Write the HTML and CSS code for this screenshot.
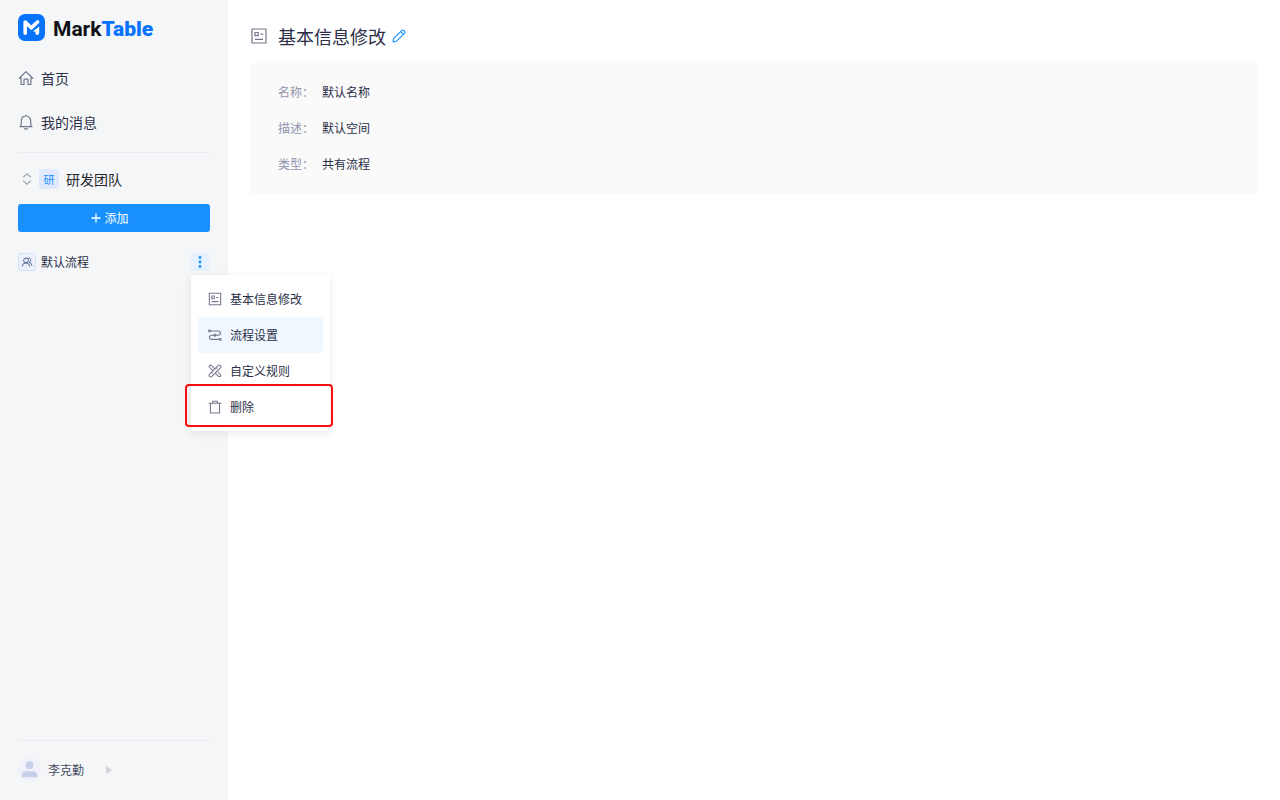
FILE: index.html
```html
<!DOCTYPE html>
<html lang="zh-CN">
<head>
    <meta charset="UTF-8">
    <meta name="viewport" content="width=device-width, initial-scale=1.0">
    <title>MarkTable</title>
    <link rel="stylesheet" href="styles.css">
</head>
<body>
    <aside class="sidebar">
        <a class="logo" href="#">
            <svg width="27" height="27" viewBox="0 0 27 27">
                <rect width="27" height="27" rx="7" fill="#0773fc"/>
                <path d="M7.2 19.3V8L13.2 13.8L19.6 8" fill="none" stroke="#fff" stroke-width="3.6" stroke-linecap="round" stroke-linejoin="round"/>
                <path d="M21.2 12.4V18.6Q21.2 21 19.2 21Q17.4 21 17.4 19V17.6H14.8Z" fill="#fff"/>
            </svg>
            <span class="logo-text">Mark<b>Table</b></span>
        </a>

        <nav class="nav">
            <a href="#">
                <svg class="icon" width="16" height="16" viewBox="0 0 16 16">
                    <path d="M1.2 8.2L8 1.6L14.8 8.2H12.9V14.5H10V9.8Q10 9.2 9.4 9.2H6.6Q6 9.2 6 9.8V14.5H3.1V8.2Z"/>
                </svg>
                首页
            </a>
            <a href="#">
                <svg class="icon" width="16" height="16" viewBox="0 0 16 16">
                    <path d="M8 .8V2M1.6 12.6H14.4M2.8 12.4Q3.3 11 3.3 7.2C3.3 4 5.2 2 8 2S12.7 4 12.7 7.2Q12.7 11 13.2 12.4M6 14.8H10"/>
                </svg>
                我的消息
            </a>
        </nav>

        <div class="team">
            <svg class="switch" width="10" height="12" viewBox="0 0 10 12">
                <path d="M1.2 4.2L5 .8L8.8 4.2M1.2 7.8L5 11.2L8.8 7.8"/>
            </svg>
            <span class="team-badge">研</span>
            <span>研发团队</span>
        </div>

        <button class="add" type="button">
            <svg width="10" height="10" viewBox="0 0 10 10">
                <path d="M5 .5V9.5M.5 5H9.5"/>
            </svg>
            添加
        </button>

        <div class="flow">
            <span class="flow-icon">
                <svg width="12" height="12" viewBox="0 0 12 12">
                    <circle cx="5" cy="4.4" r="2.4"/>
                    <path d="M1.2 10.4Q1.4 6.8 5 6.8T8.7 10.4M7.2 2.1C9.9 1.6 10.6 5.3 8.3 6.2Q10.6 6.8 10.9 9.6"/>
                </svg>
            </span>
            <span>默认流程</span>
            <div class="more">
                <button class="more-button" type="button" aria-label="更多">
                    <svg width="4" height="14" viewBox="0 0 4 14">
                        <circle cx="2" cy="2.5" r="1.4"/>
                        <circle cx="2" cy="7" r="1.4"/>
                        <circle cx="2" cy="11.5" r="1.4"/>
                    </svg>
                </button>
                <div class="menu">
                    <button type="button">
                        <svg class="icon" width="14" height="14" viewBox="0 0 16 16">
                            <path d="M1.5 1.5H14.5V14.5H1.5ZM4.3 4.6H7.3V7.6H4.3ZM9.3 6.2H12M4.2 11H11.8"/>
                        </svg>
                        基本信息修改
                    </button>
                    <button class="active" type="button">
                        <svg class="icon" width="14" height="14" viewBox="0 0 16 16">
                            <path d="M2 3.5H11.5C15.3 3.5 15.3 8.2 11.5 8.2H4.5C.7 8.2 .7 13 4.5 13H13"/>
                            <circle cx="1.8" cy="3.5" r="1.1"/>
                            <circle cx="8" cy="8.2" r="1.1"/>
                            <circle cx="14" cy="13" r="1.1"/>
                        </svg>
                        流程设置
                    </button>
                    <button type="button">
                        <svg class="icon" width="14" height="14" viewBox="0 0 16 16">
                            <path d="M5.8 8L1.8 4Q.8 2.8 1.8 1.8T4 1.8L8 5.8M10.2 8L14.2 12V14.2H12L8 10.2M1.5 11.8L11.8 1.5Q13 .8 14.2 1.8T14.5 4.2L4.2 14.5Q2.8 15.2 1.8 14.2T1.5 11.8ZM4 9.3L5.3 10.6M9.3 4L10.6 5.3"/>
                        </svg>
                        自定义规则
                    </button>
                    <button class="marked" type="button">
                        <svg class="icon" width="14" height="14" viewBox="0 0 16 16">
                            <path d="M.8 3.6H15.2M5.2 3.4V1.4H10.8V3.4M2.8 3.6V14.8H13.2V3.6"/>
                        </svg>
                        删除
                    </button>
                </div>
            </div>
        </div>

        <div class="user">
            <svg width="23" height="23" viewBox="0 0 23 23">
                <circle cx="11.5" cy="11.5" r="11.5" fill="#f0f1fb"/>
                <circle cx="11.5" cy="7.2" r="3.9" fill="#c7d0e8"/>
                <path d="M3.8 19.2V17.5Q3.8 13.2 8 13.2H15Q19.2 13.2 19.2 17.5V19.2Z" fill="#c7d0e8"/>
            </svg>
            <span>李克勤</span>
            <svg class="arrow" width="6" height="10" viewBox="0 0 6 10">
                <path d="M0 .5L6 5L0 9.5Z" fill="#d3d5d8"/>
            </svg>
        </div>
    </aside>

    <main class="content">
        <header class="title">
            <svg class="icon" width="18" height="18" viewBox="0 0 18 18">
                <path d="M2 2H16V16H2ZM5 5.5H8.2V8.7H5ZM10.6 7.2H13.2M5 12.4H13"/>
            </svg>
            <h1>基本信息修改</h1>
            <button class="edit" type="button" aria-label="编辑">
                <svg width="14" height="14" viewBox="0 0 14 14">
                    <path d="M1 13L1.8 9.4L9.9 1.3Q10.7 .6 11.5 1.3L12.7 2.5Q13.4 3.3 12.7 4.1L4.6 12.2ZM8.6 2.6L11.4 5.4"/>
                </svg>
            </button>
        </header>
        <dl class="info">
            <div><dt>名称：</dt><dd>默认名称</dd></div>
            <div><dt>描述：</dt><dd>默认空间</dd></div>
            <div><dt>类型：</dt><dd>共有流程</dd></div>
        </dl>
    </main>
</body>
</html>
```
FILE: styles.css
```css
* {
    box-sizing: border-box;
}
body {
    display: flex;
    min-height: 100vh;
    margin: 0;
    background: #fff;
    color: #2b2f48;
    font-family: "Noto Sans CJK SC", sans-serif;
    font-size: 12px;
    line-height: 20px;
}
a {
    color: inherit;
    text-decoration: none;
}
button {
    padding: 0;
    border: none;
    background: none;
    color: inherit;
    font: inherit;
    cursor: pointer;
}
svg {
    flex: none;
    display: block;
}
.icon {
    fill: none;
    stroke: #74768c;
    stroke-width: 1.2;
    stroke-linejoin: round;
}

/* sidebar */
.sidebar {
    display: flex;
    flex-direction: column;
    flex: none;
    width: 228px;
    padding: 14px 18px 19px;
    background: #f4f6f8;
}
.logo {
    display: flex;
    align-items: center;
    gap: 8px;
    height: 27px;
}
.logo-text {
    padding-top: 2px;
    color: #101114;
    font-family: Roboto, sans-serif;
    font-size: 21px;
    font-weight: 700;
}
.logo-text b {
    color: #0773fc;
}
.nav {
    margin-top: 15px;
    padding-bottom: 8px;
    border-bottom: 1px solid #eaecef;
}
.nav a {
    display: flex;
    align-items: center;
    gap: 7px;
    height: 44px;
    font-size: 14px;
}
.team {
    display: flex;
    align-items: center;
    gap: 7px;
    height: 51px;
    padding-left: 4px;
    color: #25262b;
    font-size: 14px;
}
.switch {
    fill: none;
    stroke: #a3a6ab;
    stroke-width: 1.2;
}
.team-badge {
    width: 20px;
    border-radius: 3px;
    background: #e1e9fc;
    color: #1890ff;
    font-size: 11px;
    text-align: center;
}
.add {
    display: flex;
    align-items: center;
    justify-content: center;
    gap: 3px;
    height: 28px;
    padding-right: 8px;
    border-radius: 3px;
    background: #1890ff;
    color: #fff;
}
.add svg {
    stroke: #fff;
    stroke-width: 1.3;
}
.flow {
    display: flex;
    align-items: center;
    gap: 5px;
    height: 36px;
    margin-top: 12px;
    padding-right: 1px;
}
.flow-icon {
    display: flex;
    align-items: center;
    justify-content: center;
    width: 18px;
    height: 18px;
    border: 1px solid #cfe5fc;
    border-radius: 3px;
    background: #eef1fc;
}
.flow-icon svg {
    fill: none;
    stroke: #47658f;
    stroke-width: 1;
}
.more {
    position: relative;
    margin-left: auto;
}
.more-button {
    display: flex;
    align-items: center;
    justify-content: center;
    width: 18px;
    height: 18px;
    border-radius: 3px;
    background: #e5f2fe;
}
.more-button svg {
    fill: #1890ff;
}

/* drop-down under the three dots */
.menu {
    position: absolute;
    top: 22px;
    left: 0;
    z-index: 1;
    width: 139px;
    padding: 6px 7px;
    border-radius: 3px;
    background: #fff;
    box-shadow: 0 2px 10px rgba(0, 0, 0, 0.09);
}
.menu button {
    position: relative;
    display: flex;
    align-items: center;
    gap: 8px;
    width: 100%;
    height: 36px;
    padding: 0 10px;
    border-radius: 3px;
}
.menu .active {
    background: #f0f7ff;
}
.menu .marked::after {
    content: "";
    position: absolute;
    inset: -5px -10px -2px -13px;
    border: 2px solid #fb0e0e;
    border-radius: 4px;
}

.user {
    display: flex;
    align-items: center;
    gap: 7px;
    margin-top: auto;
    padding-top: 17px;
    border-top: 1px solid #eaecef;
    color: #464c60;
}
.arrow {
    margin-left: 15px;
}

/* right side */
.content {
    flex: 1;
    padding: 0 21px;
}
.title {
    display: flex;
    align-items: center;
    height: 63px;
    padding: 8px 0 0 1px;
}
.title h1 {
    margin: 0 6px 0 10px;
    font-size: 18px;
    font-weight: 400;
}
.edit svg {
    fill: none;
    stroke: #1890ff;
    stroke-width: 1.1;
    stroke-linejoin: round;
}
.info {
    margin: 0;
    padding: 11px 29px 12px;
    border-radius: 3px;
    background: #fafafa;
}
.info div {
    display: flex;
    align-items: center;
    height: 36px;
}
.info dt {
    width: 44px;
    color: #9194ac;
}
.info dd {
    margin: 0;
}
```
